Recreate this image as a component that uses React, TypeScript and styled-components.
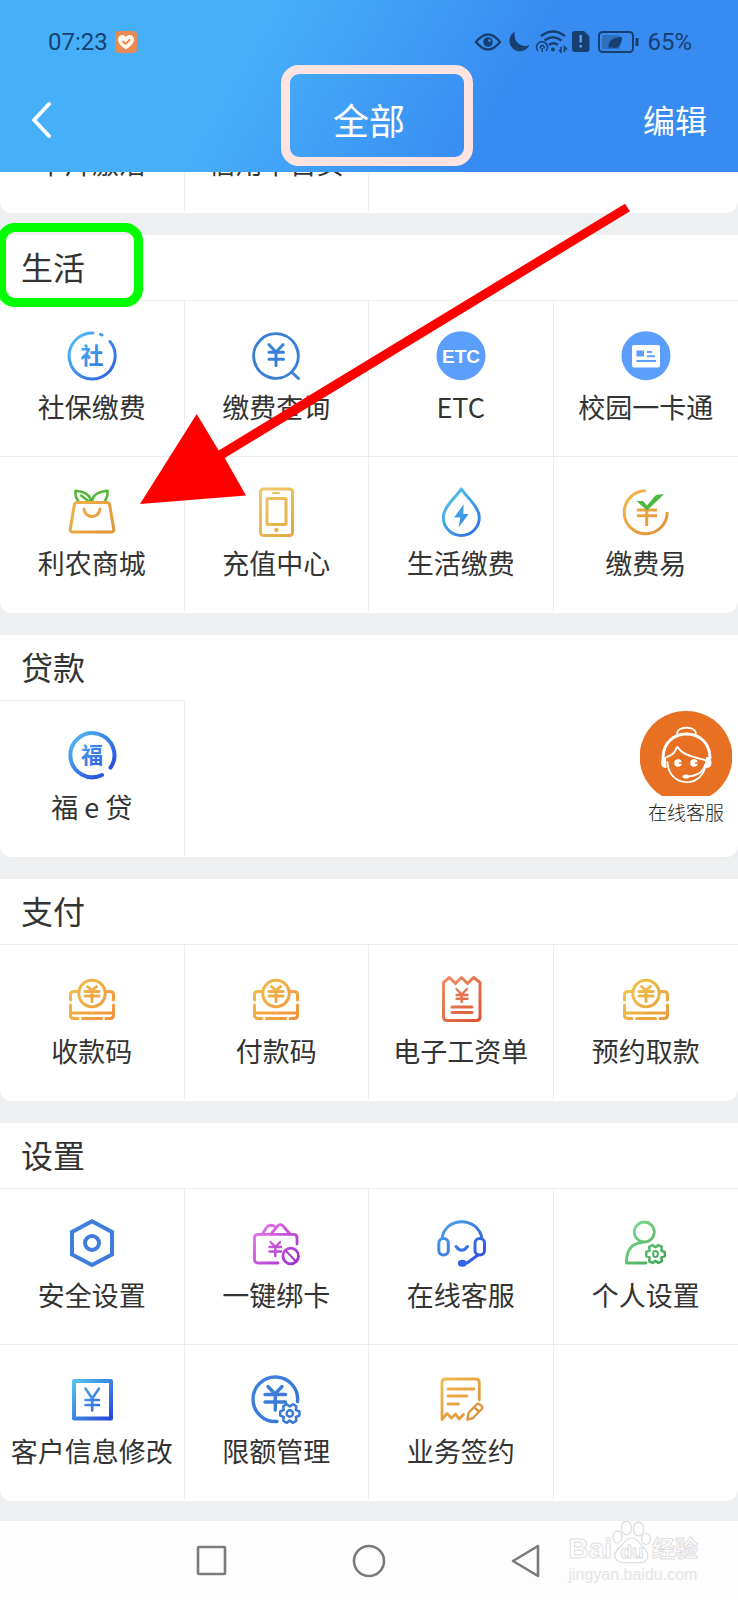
import React from "react";
import styled, { createGlobalStyle } from "styled-components";

const GlobalStyle = createGlobalStyle`
  * { box-sizing: border-box; }
  body {
    margin: 0;
    background: #eeeff1;
    color: #333;
    font-family: "Noto Sans CJK SC", sans-serif;
  }
  button {
    margin: 0;
    padding: 0;
    border: 0;
    background: none;
    color: inherit;
    font: inherit;
    cursor: pointer;
  }
  svg { display: block; flex: none; }
`;

const Page = styled.div`
  position: relative;
  display: flex;
  flex-direction: column;
  min-height: 100vh;
  overflow: hidden;
`;

const Header = styled.header`
  height: 172px;
  padding-top: 20px;
  background: linear-gradient(120deg, #46affa 33%, #388cf1 67%);
`;

const StatusBar = styled.div`
  display: flex;
  align-items: center;
  justify-content: space-between;
  height: 44px;
  padding: 0 46px 0 48px;
  color: #173f70;
  font: 24px/44px Roboto, sans-serif;
`;

const StatusGroup = styled.div`
  display: flex;
  align-items: center;
  gap: 7px;
`;

const TitleBar = styled.div`
  display: grid;
  grid-template-columns: 1fr auto 1fr;
  align-items: center;
  height: 108px;
  padding: 2px 31px 0;
  color: #fff;
`;

const BackButton = styled.button`
  justify-self: start;
`;

const PageTitle = styled.h1`
  margin: 0;
  font-size: 36px;
  font-weight: 400;
  line-height: 106px;
`;

const EditButton = styled.button`
  justify-self: end;
  font-size: 32px;
`;

const Content = styled.main`
  display: flex;
  flex-direction: column;
  gap: 22px;
  flex: 1;
  padding-bottom: 20px;
`;

const Card = styled.section`
  padding-bottom: 1px;
  background: #fff;
  border-radius: 0 0 12px 12px;
`;

const ScrolledCard = styled(Card)`
  display: flex;
  flex-direction: column;
  justify-content: flex-end;
  height: 41px;
  overflow: hidden;
`;

const CardTitle = styled.h2`
  margin: 0;
  padding: 0 0 3px 21px;
  font-size: 32px;
  font-weight: 400;
  line-height: 62px;
`;

const Grid = styled.div`
  display: grid;
  flex: none;
  grid-template-columns: repeat(4, 1fr);
`;

const Cell = styled.button`
  display: flex;
  flex-direction: column;
  align-items: center;
  gap: 8px;
  height: 156px;
  padding-top: 30px;
  border-top: 1px solid #ededee;
  border-right: 1px solid #ededee;
  &:nth-child(4n) { border-right: 0; }
`;

const EmptyCell = styled.div`
  border-top: 1px solid #ededee;
`;

const IconSlot = styled.span`
  width: 50px;
  height: 50px;
`;

const Label = styled.span`
  font-size: 27px;
  line-height: 36px;
  white-space: nowrap;
`;

const NavBar = styled.nav`
  display: flex;
  align-items: center;
  justify-content: center;
  gap: 109px;
  height: 79px;
  background: #fdfdfd;
`;

const NavButton = styled.button`
  display: grid;
  place-items: center;
  width: 48px;
  height: 48px;
`;

const ServiceButton = styled.button`
  position: absolute;
  top: 711px;
  right: 6px;
  display: flex;
  flex-direction: column;
  align-items: center;
  gap: 2px;
  color: #222;
  font-size: 19px;
  font-weight: 300;
  line-height: 28px;
`;

const Marker = styled.div<{ $color: string }>`
  position: absolute;
  border: 9px solid ${(p) => p.$color};
  border-radius: 18px;
  pointer-events: none;
`;

const TitleMarker = styled(Marker)`
  top: 65px;
  left: calc(50% - 88px);
  width: 192px;
  height: 101px;
`;

const SectionMarker = styled(Marker)`
  top: 223px;
  left: -3px;
  width: 146px;
  height: 84px;
`;

const Arrow = styled.svg`
  position: absolute;
  top: 200px;
  left: 136px;
  pointer-events: none;
`;

const Watermark = styled.div`
  position: absolute;
  right: 40px;
  bottom: 14px;
  color: #fff;
  font-family: "Liberation Sans", "Noto Sans CJK SC", sans-serif;
  -webkit-text-stroke: 1px #dfdfdf;
  pointer-events: none;
`;

const Brand = styled.div`
  display: flex;
  align-items: flex-end;
  font-size: 28px;
  font-weight: 700;
  line-height: 30px;
`;

const BrandCn = styled.span`
  font-size: 23px;
`;

const Site = styled.div`
  color: #e4e4e4;
  font-size: 16px;
  line-height: 22px;
  -webkit-text-stroke: 0;
`;

type GlyphProps = {
  id: string;
  from: string;
  to: string;
  width?: number;
  children: (paint: string) => React.ReactNode;
};

function Glyph({ id, from, to, width = 3, children }: GlyphProps) {
  const paint = `url(#${id})`;
  return (
    <svg width="50" height="50" viewBox="0 0 50 50" fill="none" stroke={paint} strokeWidth={width} strokeLinecap="round" strokeLinejoin="round" aria-hidden="true">
      <defs>
        <linearGradient id={id} gradientUnits="userSpaceOnUse" x1="4" y1="4" x2="46" y2="46">
          <stop offset="0" stopColor={from} />
          <stop offset="1" stopColor={to} />
        </linearGradient>
      </defs>
      {children(paint)}
    </svg>
  );
}

function gearPath(cx: number, cy: number, outer: number, inner: number) {
  const points: string[] = [];
  for (let tooth = 0; tooth < 6; tooth++) {
    const steps: [number, number][] = [[-12, outer], [12, outer], [30, inner]];
    for (const [offset, radius] of steps) {
      const angle = ((tooth * 60 + offset) * Math.PI) / 180;
      points.push(`${(cx + radius * Math.cos(angle)).toFixed(2)} ${(cy + radius * Math.sin(angle)).toFixed(2)}`);
    }
  }
  return `M${points.join("L")}Z`;
}

const Coin = ({ id, from, to }: { id: string; from: string; to: string }) => (
  <Glyph id={id} from={from} to={to} width={3}>
    {() => (
      <>
        <circle cx="25" cy="18.500" r="13.200" />
        <path d="M3.500 25v-5q0-3.500 3.500-3.500h4M39 16.500h4q3.500 0 3.500 3.500v5M3.500 30v10q0 3.500 3.500 3.500h4M46.500 30v10q0 3.500-3.500 3.500h-4M4 38h42M15.500 43.500h19" />
        <path d="M20.500 11.500l4.500 4 4.500-4M18 16.500h14M18 21h14M25 17v9.500" />
      </>
    )}
  </Glyph>
);

const icons = {
  social: (
    <Glyph id="g-social" from="#4fc0f6" to="#2e62e0">
      {(paint) => (
        <>
          <path d="M26 2A23 23 0 1 0 43 10.500M33.500 3.200l1.500.8" />
          <text x="25" y="33" textAnchor="middle" fontSize="23" fontWeight="700" fill={paint} stroke="none">社</text>
        </>
      )}
    </Glyph>
  ),
  query: (
    <Glyph id="g-query" from="#3b80d6" to="#3b80d6">
      {() => <path d="M41 40.500A22.300 22.300 0 1 0 40.500 41l7 6.500M18 13.700l7 7.300 7-7.300M18 21.200h14.500M18 28.200h14.500M25 21.500v13" />}
    </Glyph>
  ),
  etc: (
    <svg width="50" height="50" viewBox="0 0 50 50" aria-hidden="true">
      <circle cx="25" cy="24.700" r="24.500" fill="#5b9efc" />
      <text x="25" y="31.500" textAnchor="middle" fontFamily="Liberation Sans, sans-serif" fontSize="19" fontWeight="700" fill="#fff">ETC</text>
    </svg>
  ),
  campus: (
    <svg width="50" height="50" viewBox="0 0 50 50" aria-hidden="true">
      <circle cx="25" cy="24.700" r="24.500" fill="#5b9efc" />
      <rect x="11" y="14" width="28" height="22.500" rx="2" fill="#fff" />
      <path d="M15.500 19.500h7.500v6h-7.500z" fill="#5b9efc" />
      <path d="M26 21h5M26 25.300h8M15.500 30h19.500" stroke="#5b9efc" strokeWidth="2" />
    </svg>
  ),
  mall: (
    <Glyph id="g-mall" from="#f2b94a" to="#e29238">
      {() => (
        <>
          <g stroke="#55b83d" strokeWidth="2.600">
            <path d="M24 14.500Q23 5 8.500 3.700Q8 10 11.500 14.500M25 14.500Q26 5 40.500 3.700Q41 10 37.500 14.500M14 8.500l8 6" />
          </g>
          <path d="M10 15.500h30q2.200 0 2.700 2.500l4 24q.3 3-2.700 3H6q-3 0-2.700-3l4-24Q7.800 15.500 10 15.500zM17 22c1 10 15 10 16 0" />
        </>
      )}
    </Glyph>
  ),
  phone: (
    <Glyph id="g-phone" from="#efcb6c" to="#e2a83e">
      {(paint) => (
        <>
          <rect x="9.500" y="2" width="32" height="46.500" rx="3" />
          <rect x="16" y="11.500" width="19" height="26" rx="1" />
          <path d="M22 6h6" strokeWidth="2" />
          <circle cx="25.300" cy="43" r="2.200" fill={paint} stroke="none" />
        </>
      )}
    </Glyph>
  ),
  drop: (
    <Glyph id="g-drop" from="#58cdea" to="#2c6fe0">
      {(paint) => (
        <>
          <path d="M25.300 2C20 10 7.300 20 7.300 30.500a18 18 0 0 0 36 0C43.300 20 30.500 10 25.300 2z" />
          <path d="M27.700 17.300L18 30.500h6.300l-1.600 9.800 10-13.300h-5.400z" fill={paint} stroke="none" />
        </>
      )}
    </Glyph>
  ),
  payEasy: (
    <Glyph id="g-easy" from="#f3b648" to="#e3903a">
      {() => (
        <>
          <path d="M24.700 3.800A21.500 21.500 0 1 0 46.200 25" strokeLinecap="butt" />
          <path d="M16 23h20M16 28.700h20M25.700 23v16" strokeLinecap="butt" />
          <path d="M15.500 14h6.500l4 4.500L34 9q2-2 9-1.700L26 23.500z" fill="#4cb93f" stroke="none" />
        </>
      )}
    </Glyph>
  ),
  fortune: (
    <Glyph id="g-fortune" from="#52bdf2" to="#2341dc" width={4}>
      {(paint) => (
        <>
          <path d="M43.500 36.700A22 22 0 1 0 35 44" />
          <text x="25" y="32" textAnchor="middle" fontSize="22" fontWeight="700" fill={paint} stroke="none">福</text>
        </>
      )}
    </Glyph>
  ),
  receive: <Coin id="g-receive" from="#f0c04e" to="#f0913a" />,
  pay: <Coin id="g-pay" from="#f0c04e" to="#f0913a" />,
  withdraw: <Coin id="g-withdraw" from="#f2c84e" to="#e59a3c" />,
  payroll: (
    <Glyph id="g-payroll" from="#f0906c" to="#d9532f">
      {() => (
        <>
          <path d="M7.500 7.500l6-5 6 6 6-6 6 6 6-6 6.500 5V42q0 3.500-3.500 3.500H11Q7.500 45.500 7.500 42z" />
          <path d="M20.500 14l5.200 5.500 5.200-5.500M20.500 20h11M20.500 23.800h11M25.700 19.500V27" strokeWidth="2.400" />
          <path d="M16 32h20M16 37.500h20" />
        </>
      )}
    </Glyph>
  ),
  security: (
    <Glyph id="g-security" from="#3f80e0" to="#3f7ad8" width={4}>
      {() => (
        <>
          <path d="M25 2.200L45 13v22.500L25 46 5 35.500V13z" strokeLinejoin="miter" />
          <circle cx="25" cy="24" r="7" />
        </>
      )}
    </Glyph>
  ),
  bindCard: (
    <Glyph id="g-bind" from="#f078ea" to="#9b2fc9" width={2.8}>
      {() => (
        <>
          <path d="M46 25v-6q0-3.700-3.700-3.700H7Q3.500 15.300 3.500 19v21q0 4 4 4H27" />
          <path d="M11.500 15l4-6.500q2.500-3.500 7.500-1.500M20 15l6.500-8q2.500-2.500 5-.5L39 15" />
          <path d="M19.500 23l4.800 5 4.800-5M18.500 28h11.500M18.500 32.500h11.500M24.300 28v9" strokeWidth="2.400" />
          <circle cx="39.700" cy="37" r="7.800" />
          <path d="M34.500 31.500l10.500 11" strokeWidth="2" />
        </>
      )}
    </Glyph>
  ),
  headset: (
    <Glyph id="g-headset" from="#4aa8ea" to="#2d4be0">
      {(paint) => (
        <>
          <path d="M6 19.500C9 -3 42 -3 46 19.500M20 27.500q5.700 7.500 11.500 0M42 36l-11 8" />
          <rect x="2.800" y="19.500" width="9.500" height="16.500" rx="4.500" />
          <rect x="39" y="19.500" width="9.500" height="16.500" rx="4.500" />
          <ellipse cx="26.300" cy="44.300" rx="4.500" ry="3.500" fill={paint} stroke="none" />
        </>
      )}
    </Glyph>
  ),
  profile: (
    <Glyph id="g-profile" from="#86df98" to="#36a04a" width={2.8}>
      {() => (
        <>
          <circle cx="23.300" cy="13" r="10" />
          <path d="M25 44H5.500Q5 25 21 23.500" />
          <path d={gearPath(34.5, 35, 9.5, 6.8)} strokeWidth="2.500" />
          <ellipse cx="34.500" cy="35" rx="2.400" ry="3" strokeWidth="2" />
        </>
      )}
    </Glyph>
  ),
  customer: (
    <Glyph id="g-customer" from="#56cbed" to="#2540d6" width={4}>
      {() => (
        <>
          <path d="M7 6h37v37.500H7z" strokeLinejoin="round" />
          <path d="M18.500 13.500l6.700 10 6.800-10M18.500 25h13.500M18.500 30h13.500M25.200 24v11.500" strokeWidth="2.600" />
        </>
      )}
    </Glyph>
  ),
  limit: (
    <Glyph id="g-limit" from="#3c82dc" to="#3a76d4" width={3.4}>
      {() => (
        <>
          <path d="M46.500 26.500A22.300 22.300 0 1 0 26 46.500" />
          <path d="M17 11.500l7 7.500 7-7.500M14 19.500h20.500M14 27h20.500M24.300 20v15" />
          <path d={gearPath(38.8, 38.5, 9.8, 7)} strokeWidth="2.500" />
          <circle cx="38.800" cy="38.500" r="3.200" strokeWidth="2.400" />
        </>
      )}
    </Glyph>
  ),
  contract: (
    <Glyph id="g-contract" from="#edbc4e" to="#dd8c3a" width={2.8}>
      {() => (
        <>
          <path d="M43.300 25V7.500q0-3.500-3.500-3.500h-30Q6 4 6 7.500v37l5-6 4.500 4.500 4-4 3.500 5 4.500-4.500" />
          <path d="M12 14h26M12 21h19M12 29h10.500" />
          <path d="M32.500 38l8-8.500q1.500-1.500 3.200 0l2 1.500q1.300 1.500 0 3L37 43l-5.500 1.700zM38.500 32.500l4.500 4" strokeWidth="2.400" />
        </>
      )}
    </Glyph>
  ),
};

type Item = { label: string; icon: keyof typeof icons };

const sections: { title: string; items: Item[] }[] = [
  {
    title: "生活",
    items: [
      { label: "社保缴费", icon: "social" },
      { label: "缴费查询", icon: "query" },
      { label: "ETC", icon: "etc" },
      { label: "校园一卡通", icon: "campus" },
      { label: "利农商城", icon: "mall" },
      { label: "充值中心", icon: "phone" },
      { label: "生活缴费", icon: "drop" },
      { label: "缴费易", icon: "payEasy" },
    ],
  },
  { title: "贷款", items: [{ label: "福 e 贷", icon: "fortune" }] },
  {
    title: "支付",
    items: [
      { label: "收款码", icon: "receive" },
      { label: "付款码", icon: "pay" },
      { label: "电子工资单", icon: "payroll" },
      { label: "预约取款", icon: "withdraw" },
    ],
  },
  {
    title: "设置",
    items: [
      { label: "安全设置", icon: "security" },
      { label: "一键绑卡", icon: "bindCard" },
      { label: "在线客服", icon: "headset" },
      { label: "个人设置", icon: "profile" },
      { label: "客户信息修改", icon: "customer" },
      { label: "限额管理", icon: "limit" },
      { label: "业务签约", icon: "contract" },
    ],
  },
];

const HealthBadge = () => (
  <svg width="22" height="22" viewBox="0 0 22 22" aria-hidden="true">
    <rect width="22" height="22" rx="4" fill="#e88a52" />
    <path d="M11 18.500C6 15 3 12 3 8.500 3 4 8.500 2.500 11 6c2.500-3.500 8-2 8 2.500 0 3.500-3 6.500-8 10z" fill="#fff8ea" />
    <path d="M7.500 10l3 3 4.500-4.500" fill="none" stroke="#e88a52" strokeWidth="1.800" />
  </svg>
);

const StatusIcons = () => (
  <svg width="166" height="24" viewBox="475 30 166 24" fill="none" stroke="#173f70" strokeWidth="2.400" aria-hidden="true">
    <path d="M477 42q12-15 24 0q-12 15-24 0z" />
    <circle cx="489" cy="42" r="4.800" fill="#173f70" stroke="none" />
    <circle cx="490.500" cy="40.500" r="1.300" fill="#3d94f2" stroke="none" />
    <path d="M516 31.500a10.500 10.500 0 1 0 14.500 13.500c-9 3.500-17-4-14.500-13.500z" fill="#173f70" stroke="none" />
    <path d="M542 36q12-9 24 0M545.500 40.500q8.500-6.500 17 0M550 45q4.500-3.500 9 0" />
    <path d="M539 51a5.500 5.500 0 1 1 8 0M541.500 48.500a2 2 0 1 1 3.500 0M543.200 48v4" strokeWidth="1.500" />
    <circle cx="554" cy="49.500" r="2" fill="#173f70" stroke="none" />
    <path d="M562 47v5l-2-2M565.500 52v-5l2.500 2.500" strokeWidth="1.600" />
    <path d="M576 31h9l5.500 5.500V49q0 3-3 3H576q-3 0-3-3V34q0-3 3-3z" fill="#173f70" stroke="none" />
    <path d="M581.700 35v7.500M581.700 45v2.600" stroke="#5aa4f2" />
    <rect x="600" y="32" width="34" height="20" rx="3.500" strokeWidth="2" />
    <rect x="603" y="35" width="18" height="14" rx="1" fill="#2c71c0" stroke="none" />
    <path d="M610 49c-2-8 4-12 13-12 0 8-4 13-11 10zM609 51l7-8" fill="#173f70" stroke="none" />
    <path d="M638 38v8" strokeWidth="3" />
  </svg>
);

const Agent = () => (
  <svg width="92" height="85" viewBox="0 0 92 85" fill="none" stroke="#fff" strokeWidth="2.400" strokeLinecap="round" aria-hidden="true">
    <path d="M46 0a45.700 45.700 0 0 1 24 85H22A45.700 45.700 0 0 1 46 0z" fill="#e87022" stroke="none" />
    <path d="M37 22c1-7 18-7 19 0" strokeWidth="2" />
    <path d="M23 47C23 15 70 15 70 47" strokeWidth="3" />
    <path d="M27.500 51c1 27 38 27 38.500-1" strokeWidth="1.800" />
    <path d="M27 46q8-3 9.500-9M37.500 36c6 9 17 10 27.500 13M65 54c-2 8-9 11-18 11.500" strokeWidth="2" />
    <path d="M26 46q-5 0-5 5.500t5.500 5.500zM66 46q5.500 0 5.500 5.500T66 57z" fill="#fff" stroke="none" />
    <circle cx="38" cy="52" r="3.800" fill="#fff" stroke="none" />
    <circle cx="54" cy="52" r="3.800" fill="#fff" stroke="none" />
    <path d="M39.500 52h2M55.500 52h2" stroke="#e87022" strokeWidth="1.600" />
    <ellipse cx="46" cy="65.500" rx="3.500" ry="2" fill="#fff" stroke="none" />
  </svg>
);

const Paw = () => (
  <svg width="40" height="44" viewBox="0 0 40 44" fill="#fff" stroke="#dcdcdc" strokeWidth="1.200" aria-hidden="true">
    <ellipse cx="5.500" cy="17" rx="4.500" ry="6" />
    <ellipse cx="14.500" cy="8" rx="5" ry="6.800" />
    <ellipse cx="26.500" cy="9" rx="5" ry="6.800" />
    <ellipse cx="34" cy="19" rx="4.500" ry="5.500" />
    <path d="M20 18c5 0 7 5 11 9s6 7 4 12-8 3.500-15 3.500S7 44 4 39s0-8 4-12 7-9 12-9z" />
    <text x="20" y="38" textAnchor="middle" fontSize="19" fontWeight="700" strokeWidth="1">du</text>
  </svg>
);

export default function App() {
  return (
    <Page>
      <GlobalStyle />
      <Header>
        <StatusBar>
          <StatusGroup>
            <span>07:23</span>
            <HealthBadge />
          </StatusGroup>
          <StatusGroup>
            <StatusIcons />
            <span>65%</span>
          </StatusGroup>
        </StatusBar>
        <TitleBar>
          <BackButton aria-label="返回">
            <svg width="22" height="38" viewBox="0 0 22 38" fill="none" stroke="#fff" strokeWidth="3.800" strokeLinecap="round" strokeLinejoin="round">
              <path d="M18 4L3 20l15 16" />
            </svg>
          </BackButton>
          <PageTitle>全部</PageTitle>
          <EditButton>编辑</EditButton>
        </TitleBar>
      </Header>

      <Content>
        <ScrolledCard>
          <Grid>
            {["卡片激活", "信用卡首页"].map((label) => (
              <Cell key={label}>
                <IconSlot />
                <Label>{label}</Label>
              </Cell>
            ))}
          </Grid>
        </ScrolledCard>
        {sections.map(({ title, items }) => (
          <Card key={title}>
            <CardTitle>{title}</CardTitle>
            <Grid>
              {items.map(({ label, icon }) => (
                <Cell key={label}>
                  {icons[icon]}
                  <Label>{label}</Label>
                </Cell>
              ))}
              {items.length > 4 && items.length % 4 > 0 && <EmptyCell />}
            </Grid>
          </Card>
        ))}
      </Content>

      <NavBar aria-label="系统导航">
        <NavButton aria-label="最近任务">
          <svg width="32" height="32" fill="none" stroke="#7b7b7b" strokeWidth="2.600">
            <rect x="2" y="2" width="27" height="27" rx="1" />
          </svg>
        </NavButton>
        <NavButton aria-label="主屏幕">
          <svg width="34" height="34" fill="none" stroke="#7b7b7b" strokeWidth="2.600">
            <circle cx="17" cy="17" r="15" />
          </svg>
        </NavButton>
        <NavButton aria-label="后退">
          <svg width="30" height="34" fill="none" stroke="#7b7b7b" strokeWidth="2.600" strokeLinejoin="round">
            <path d="M27 2v30L2 17z" />
          </svg>
        </NavButton>
      </NavBar>

      <ServiceButton>
        <Agent />
        <span>在线客服</span>
      </ServiceButton>

      <TitleMarker $color="#ffe3e0" />
      <SectionMarker $color="#00ff00" />
      <Arrow width="500" height="310" viewBox="136 200 500 310" aria-hidden="true">
        <path d="M140 504L196.700 414l22 36.500L625 203.700l5 7.500L224.700 458 246 495.500z" fill="#f00" />
      </Arrow>

      <Watermark>
        <Brand>
          <span>Bai</span>
          <Paw />
          <BrandCn>经验</BrandCn>
        </Brand>
        <Site>jingyan.baidu.com</Site>
      </Watermark>
    </Page>
  );
}
